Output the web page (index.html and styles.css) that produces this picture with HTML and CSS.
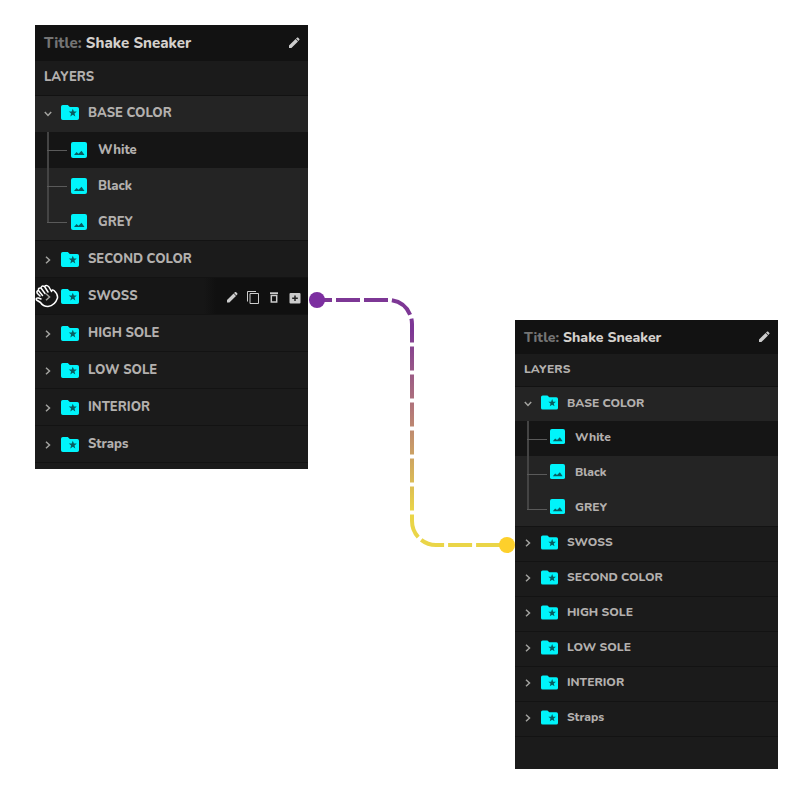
FILE: index.html
```html
<!DOCTYPE html>
<html lang="en">
<head>
    <meta charset="UTF-8">
    <meta name="viewport" content="width=device-width, initial-scale=1.0">
    <title>Shake Sneaker - Layers</title>
    <link rel="stylesheet" href="styles.css">
</head>
<body>

    <!-- Shared icons -->
    <svg class="sprite" aria-hidden="true">
        <symbol id="icon-folder" viewBox="0 0 18 15">
            <path fill="#00f4fb" d="M1.800 0H6.800L8.800 2H16.200Q18 2 18 3.800V13.200Q18 15 16.200 15H1.800Q0 15 0 13.200V1.800Q0 0 1.800 0Z"/>
            <path fill="#075b60" d="M11.800 3.800L12.900 6.600H15.800L13.500 8.500L14.300 11.400L11.800 9.800L9.300 11.400L10.100 8.500L7.800 6.600H10.700Z"/>
        </symbol>
        <symbol id="icon-image" viewBox="0 0 16 16">
            <rect width="16" height="16" rx="2" fill="#00f4fb"/>
            <path fill="#075b60" d="M3 13L5.500 10L7.500 11.800L10.500 8.800L13.500 13Z"/>
        </symbol>
        <symbol id="icon-chevron" viewBox="0 0 10 10">
            <path fill="none" stroke="#a3a3a0" stroke-width="1.500" d="M3 1.800L6.500 5L3 8.200"/>
        </symbol>
        <symbol id="icon-pencil" viewBox="0 0 12 12">
            <path fill="currentColor" d="M1 11V8.600L7.600 2L10 4.400L3.400 11ZM8 1.600L9.200 .6Q9.600 .2 10 .6L11.400 2Q11.800 2.400 11.400 2.800L10.400 4Z"/>
        </symbol>
        <symbol id="icon-copy" viewBox="0 0 12 13">
            <path fill="none" stroke="currentColor" d="M.5 10.500V.5H9M3 2.500H11.500V12.500H3Z"/>
        </symbol>
        <symbol id="icon-trash" viewBox="0 0 12 12">
            <path fill="currentColor" d="M2 .8H10V2.600H2Z"/>
            <path fill="none" stroke="currentColor" stroke-width="1.500" d="M3.300 4H8.700V10.500H3.300Z"/>
        </symbol>
        <symbol id="icon-add" viewBox="0 0 12 12">
            <rect x=".5" y="1.500" width="11" height="10.500" rx="1" fill="currentColor"/>
            <path stroke="#222" stroke-width="1.500" d="M6 4V9.500M3.200 6.700H8.800"/>
        </symbol>
    </svg>

    <main class="board">

        <!-- Layers before the move -->
        <section class="panel panel-before">
            <header class="panel-header">
                <h2><span>Title:</span> Shake Sneaker</h2>
                <button aria-label="Edit title"><svg><use href="#icon-pencil"/></svg></button>
            </header>
            <h3>LAYERS</h3>
            <ul class="layers">
                <li class="group">
                    <div class="row">
                        <button class="toggle open" aria-label="Collapse"><svg><use href="#icon-chevron"/></svg></button>
                        <svg class="folder"><use href="#icon-folder"/></svg>
                        <span>BASE COLOR</span>
                    </div>
                    <ul class="leaves">
                        <li class="leaf active"><svg><use href="#icon-image"/></svg>White</li>
                        <li class="leaf"><svg><use href="#icon-image"/></svg>Black</li>
                        <li class="leaf"><svg><use href="#icon-image"/></svg>GREY</li>
                    </ul>
                </li>
                <li class="row"><button class="toggle" aria-label="Expand"><svg><use href="#icon-chevron"/></svg></button><svg class="folder"><use href="#icon-folder"/></svg><span>SECOND COLOR</span></li>
                <li class="row dragging">
                    <button class="toggle" aria-label="Expand"><svg><use href="#icon-chevron"/></svg></button>
                    <svg class="folder"><use href="#icon-folder"/></svg>
                    <span>SWOSS</span>
                    <div class="actions">
                        <button aria-label="Rename"><svg><use href="#icon-pencil"/></svg></button>
                        <button aria-label="Duplicate"><svg><use href="#icon-copy"/></svg></button>
                        <button aria-label="Delete"><svg><use href="#icon-trash"/></svg></button>
                        <button aria-label="Add"><svg><use href="#icon-add"/></svg></button>
                    </div>
                    <svg class="hand" viewBox="0 0 24 24">
                        <path fill="none" stroke="#fff" stroke-width="1.500" stroke-linejoin="round" stroke-linecap="round" d="M5 12L2.500 9.500Q1 7 3.500 6.500Q3 3.500 6 4Q6.500 1 9.500 2.500Q11.500 .5 14 3L16.500 7.500Q17 5 19 6.500Q23 10 22.500 14Q20 21.500 13 22.500Q8 22.500 5.500 18.500L1.500 16Q.5 13.500 3.500 14L6 15M3.500 6.500L7.500 11.500M6 4L10 9.500M9.500 2.500L13 8"/>
                    </svg>
                </li>
                <li class="row"><button class="toggle" aria-label="Expand"><svg><use href="#icon-chevron"/></svg></button><svg class="folder"><use href="#icon-folder"/></svg><span>HIGH SOLE</span></li>
                <li class="row"><button class="toggle" aria-label="Expand"><svg><use href="#icon-chevron"/></svg></button><svg class="folder"><use href="#icon-folder"/></svg><span>LOW SOLE</span></li>
                <li class="row"><button class="toggle" aria-label="Expand"><svg><use href="#icon-chevron"/></svg></button><svg class="folder"><use href="#icon-folder"/></svg><span>INTERIOR</span></li>
                <li class="row"><button class="toggle" aria-label="Expand"><svg><use href="#icon-chevron"/></svg></button><svg class="folder"><use href="#icon-folder"/></svg><span>Straps</span></li>
            </ul>
        </section>

        <!-- Dashed line from the old place to the new one -->
        <svg class="connector" viewBox="0 0 207 264" aria-hidden="true">
            <defs>
                <linearGradient id="fade" gradientUnits="userSpaceOnUse" x1="0" y1="40" x2="0" y2="220">
                    <stop offset="0" stop-color="#7d3795"/>
                    <stop offset=".45" stop-color="#b57a78"/>
                    <stop offset="1" stop-color="#ead548"/>
                </linearGradient>
            </defs>
            <path fill="none" stroke="url(#fade)" stroke-width="4" stroke-dasharray="24 4" stroke-dashoffset="9" d="M9 9H80A24 24 0 0 1 104 33V230A24 24 0 0 0 128 254H199"/>
            <circle cx="9" cy="9" r="8" fill="#7c2fa0"/>
            <circle cx="199" cy="254" r="8" fill="#fdd02b"/>
        </svg>

        <!-- Layers after the move -->
        <section class="panel panel-after">
            <header class="panel-header">
                <h2><span>Title:</span> Shake Sneaker</h2>
                <button aria-label="Edit title"><svg><use href="#icon-pencil"/></svg></button>
            </header>
            <h3>LAYERS</h3>
            <ul class="layers">
                <li class="group">
                    <div class="row">
                        <button class="toggle open" aria-label="Collapse"><svg><use href="#icon-chevron"/></svg></button>
                        <svg class="folder"><use href="#icon-folder"/></svg>
                        <span>BASE COLOR</span>
                    </div>
                    <ul class="leaves">
                        <li class="leaf active"><svg><use href="#icon-image"/></svg>White</li>
                        <li class="leaf"><svg><use href="#icon-image"/></svg>Black</li>
                        <li class="leaf"><svg><use href="#icon-image"/></svg>GREY</li>
                    </ul>
                </li>
                <li class="row"><button class="toggle" aria-label="Expand"><svg><use href="#icon-chevron"/></svg></button><svg class="folder"><use href="#icon-folder"/></svg><span>SWOSS</span></li>
                <li class="row"><button class="toggle" aria-label="Expand"><svg><use href="#icon-chevron"/></svg></button><svg class="folder"><use href="#icon-folder"/></svg><span>SECOND COLOR</span></li>
                <li class="row"><button class="toggle" aria-label="Expand"><svg><use href="#icon-chevron"/></svg></button><svg class="folder"><use href="#icon-folder"/></svg><span>HIGH SOLE</span></li>
                <li class="row"><button class="toggle" aria-label="Expand"><svg><use href="#icon-chevron"/></svg></button><svg class="folder"><use href="#icon-folder"/></svg><span>LOW SOLE</span></li>
                <li class="row"><button class="toggle" aria-label="Expand"><svg><use href="#icon-chevron"/></svg></button><svg class="folder"><use href="#icon-folder"/></svg><span>INTERIOR</span></li>
                <li class="row"><button class="toggle" aria-label="Expand"><svg><use href="#icon-chevron"/></svg></button><svg class="folder"><use href="#icon-folder"/></svg><span>Straps</span></li>
            </ul>
        </section>

    </main>

</body>
</html>
```
FILE: styles.css
```css
* {
    box-sizing: border-box;
}

body {
    margin: 0;
    background-color: #fff;
    font-family: Nunito, "Open Sans", sans-serif;
}

h2, h3, ul {
    margin: 0;
    padding: 0;
    list-style: none;
}

button {
    display: flex;
    padding: 0;
    border: none;
    background: none;
    color: #ccc;
    cursor: pointer;
}

.sprite {
    position: absolute;
    width: 0;
    height: 0;
}

/* Two panels with the connector between them */
.board {
    display: grid;
    grid-template-columns: 273fr 207fr 263fr;
    align-items: start;
    padding: 25px 22px 31px 35px;
}

.panel {
    --header: 36px;
    --row: 37px;
    --first: 36px;
    --leaf: 36px;
    --lift: 0;
    --folder: 18px;
    --image: 16px;
    --text: 13px;
    --title: 15px;
    background-color: #1b1b1b;
    color: #b3b0ae;
    font-size: var(--text);
    font-weight: 800;
}

.panel-before {
    padding-bottom: 6px;
}

.panel-after {
    --header: 34px;
    --row: 35px;
    --first: 34px;
    --leaf: 35px;
    --lift: 4px;
    --folder: 17px;
    --image: 15px;
    --text: 12px;
    --title: 14px;
    margin-top: 295px;
    padding-bottom: 32px;
}

.connector {
    width: 100%;
    margin-top: 266px;
}

.panel-header {
    display: flex;
    align-items: center;
    justify-content: space-between;
    height: var(--header);
    padding: 0 8px 0 9px;
    background-color: #121212;
}

.panel-header h2 {
    color: #d4d0cc;
    font-size: var(--title);
    font-weight: 800;
}

.panel-header h2 span {
    color: #747474;
}

.panel-header svg {
    width: 12px;
    height: 12px;
}

.panel h3 {
    display: flex;
    align-items: center;
    height: calc(var(--row) - 2px);
    padding: 0 9px 2px;
    border-bottom: 1px solid #121212;
    font-size: var(--text);
    font-weight: 800;
}

.row {
    position: relative;
    display: flex;
    align-items: center;
    height: var(--row);
    padding-bottom: var(--lift);
    padding-left: 8px;
    border-bottom: 1px solid #131313;
}

.toggle {
    padding-top: 2px;
}

.toggle svg {
    width: 10px;
    height: 10px;
}

.toggle.open svg {
    transform: rotate(90deg);
}

.folder {
    width: var(--folder);
    height: 15px;
    margin: 0 9px 0 8px;
}

.group {
    background-color: #242424;
    border-bottom: 1px solid #131313;
}

.group .row {
    height: var(--first);
    padding-bottom: 3px;
    border-bottom: none;
}

.leaf {
    position: relative;
    display: flex;
    align-items: center;
    gap: 11px;
    height: var(--leaf);
    padding-bottom: var(--lift);
    padding-left: 36px;
}

.panel-after .leaf {
    gap: 10px;
    padding-left: 35px;
}

.leaf.active {
    background-color: #151515;
}

.leaf svg {
    width: var(--image);
    height: var(--image);
}

/* Tree lines */
.leaf::before {
    content: '';
    position: absolute;
    top: 0;
    left: 12px;
    width: 2px;
    height: 100%;
    background-color: #444;
}

.leaf:last-child::before {
    height: 50%;
}

.leaf::after {
    content: '';
    position: absolute;
    top: 50%;
    left: 12px;
    width: 20px;
    height: 1px;
    background-color: #5a5a5a;
}

/* Row being dragged */
.dragging {
    background-color: #161616;
}

.actions {
    display: flex;
    align-items: center;
    justify-content: flex-end;
    gap: 9px;
    height: 100%;
    margin-left: auto;
    padding: 3px 7px 0 22px;
    background: linear-gradient(to right, #161616, #101010 12px);
}

.actions svg {
    width: 12px;
    height: 13px;
}

.hand {
    position: absolute;
    left: 0;
    width: 24px;
    height: 24px;
}
```
